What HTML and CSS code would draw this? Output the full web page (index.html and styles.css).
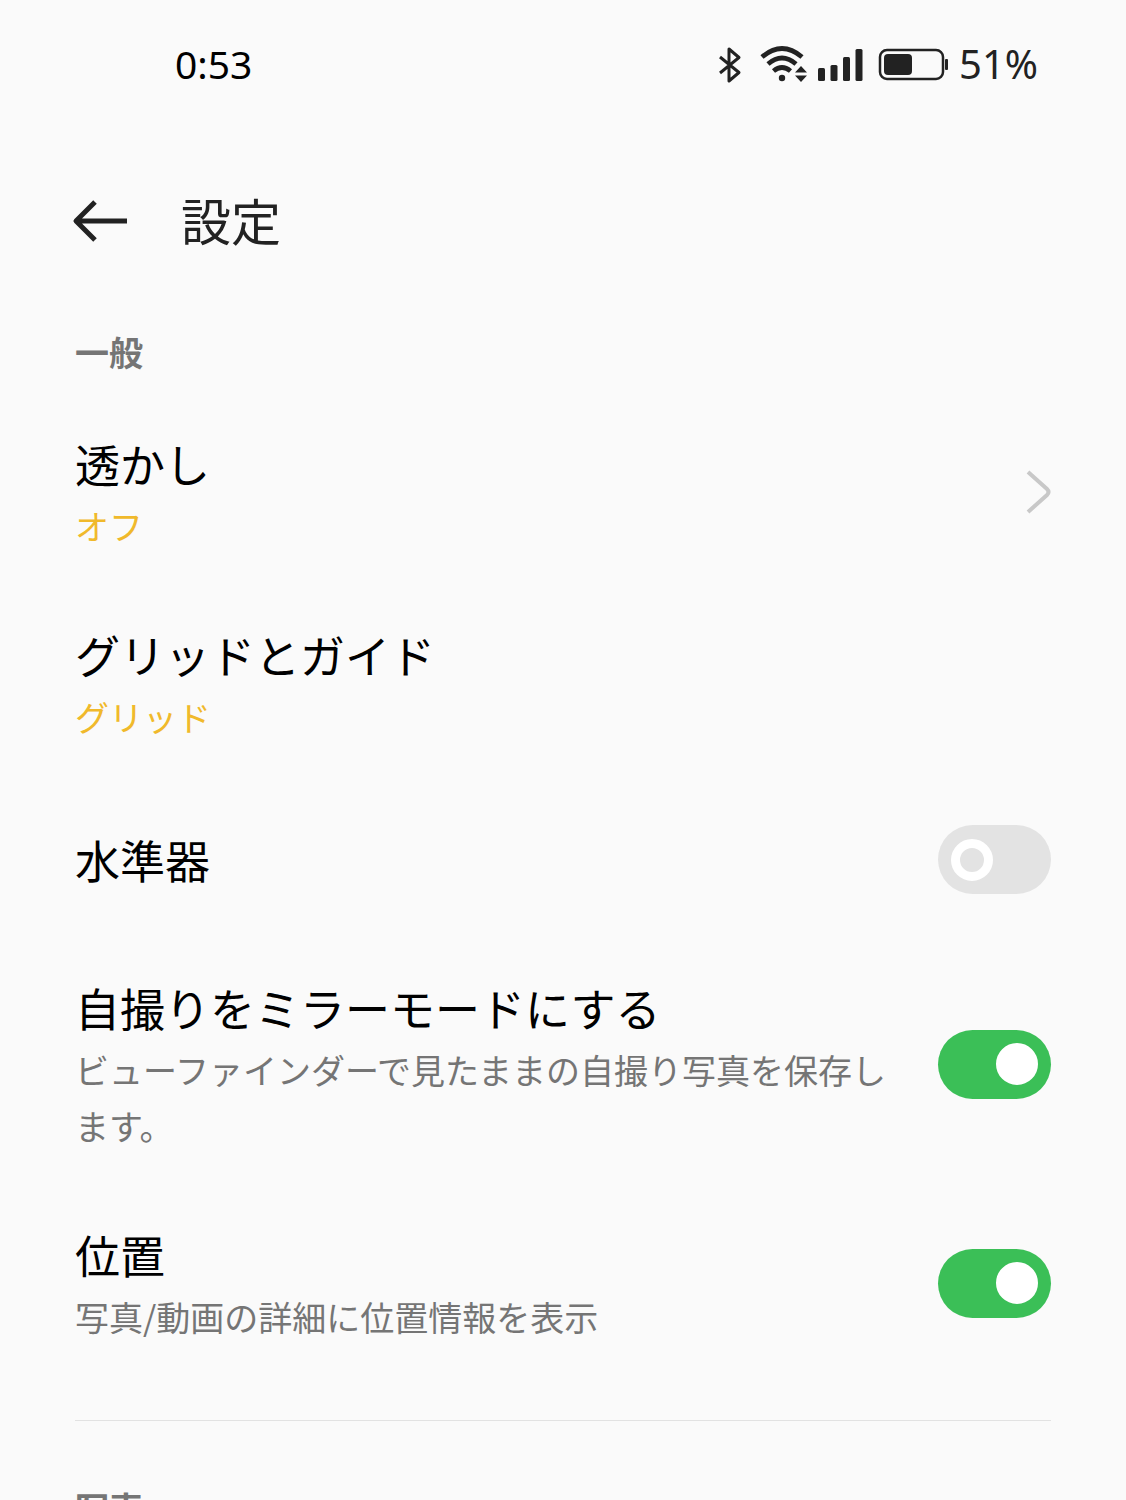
FILE: index.html
```
<!DOCTYPE html>
<html lang="ja">

<head>
    <meta charset="utf-8">
    <meta name="viewport" content="width=device-width, initial-scale=1">
    <title>設定</title>
    <link rel="stylesheet" href="styles.css">
</head>

<body>
    <div class="screen">
        <div class="status-bar">
            <span class="clock">0:53</span>
            <div class="status-icons">
                <svg class="icon-bluetooth" width="24" height="40" viewBox="0 0 24 40" aria-hidden="true">
                    <path d="M2 12 L21 27.500 L11 36 V4 L21 12.500 L2 28" fill="none" stroke="#222" stroke-width="3" stroke-linejoin="round" />
                </svg>
                <svg class="icon-wifi" width="48" height="40" viewBox="0 0 48 40" aria-hidden="true">
                    <g fill="none" stroke="#222" stroke-width="4.800">
                        <path d="M2 12 Q22 -5 42 12" />
                        <path d="M8 19 Q22 7 36 19" />
                        <path d="M13.500 26 Q22 19 30.500 26" />
                    </g>
                    <circle cx="22" cy="33" r="3.200" fill="#222" />
                    <path d="M41 21 L47 27.500 H35 Z M35 30.500 H47 L41 37 Z" fill="#222" />
                </svg>
                <svg class="icon-signal" width="45" height="40" viewBox="0 0 45 40" aria-hidden="true">
                    <g fill="#222">
                        <rect x="0" y="23" width="7" height="13" rx="1.500" />
                        <rect x="12.500" y="20" width="7" height="16" rx="1.500" />
                        <rect x="25" y="12" width="7" height="24" rx="1.500" />
                        <rect x="37.500" y="4" width="7" height="32" rx="1.500" />
                    </g>
                </svg>
                <svg class="icon-battery" width="71" height="40" viewBox="0 0 71 40" aria-hidden="true">
                    <rect x="2" y="5" width="63" height="29" rx="7" fill="none" stroke="#222" stroke-width="2.500" />
                    <rect x="6" y="9" width="28" height="21" rx="4" fill="#222" />
                    <rect x="67" y="14" width="3" height="11" rx="1" fill="#222" />
                </svg>
                <span class="battery-level">51%</span>
            </div>
        </div>

        <header class="app-bar">
            <button type="button" class="back-btn" aria-label="戻る">
                <svg width="56" height="44" viewBox="0 0 56 44" aria-hidden="true">
                    <path d="M23 3 L4 22 L23 41 M4 22 H55" fill="none" stroke="#222" stroke-width="5" stroke-linejoin="round" />
                </svg>
            </button>
            <h1>設定</h1>
        </header>

        <main>
            <section class="group">
                <h2>一般</h2>

                <a href="#watermark" class="row">
                    <span class="row-text">
                        <span class="row-title">透かし</span>
                        <span class="row-value">オフ</span>
                    </span>
                    <svg class="chevron" width="25" height="44" viewBox="0 0 25 44" aria-hidden="true">
                        <path d="M2 2 L21 19 Q24 22 21 25 L2 42" fill="none" stroke="#c8c8c8" stroke-width="4" />
                    </svg>
                </a>

                <a href="#grid" class="row">
                    <span class="row-text">
                        <span class="row-title">グリッドとガイド</span>
                        <span class="row-value">グリッド</span>
                    </span>
                </a>

                <label class="row row-single" for="level">
                    <span class="row-text">
                        <span class="row-title">水準器</span>
                    </span>
                    <input type="checkbox" role="switch" class="switch" id="level">
                </label>

                <label class="row" for="mirror">
                    <span class="row-text">
                        <span class="row-title">自撮りをミラーモードにする</span>
                        <span class="row-note">ビューファインダーで見たままの自撮り写真を保存します。</span>
                    </span>
                    <input type="checkbox" role="switch" class="switch" id="mirror" checked>
                </label>

                <label class="row" for="location">
                    <span class="row-text">
                        <span class="row-title">位置</span>
                        <span class="row-note">写真/動画の詳細に位置情報を表示</span>
                    </span>
                    <input type="checkbox" role="switch" class="switch" id="location" checked>
                </label>
            </section>

            <section class="group">
                <h2>写真</h2>
            </section>
        </main>
    </div>
</body>

</html>
```
FILE: styles.css
```
* {
    box-sizing: border-box;
}

body {
    margin: 0;
    background-color: #fafafa;
    color: #000;
    font-family: "Noto Sans CJK JP", sans-serif;
}

.screen {
    height: 100vh;
    overflow: hidden;
}

/* Status bar */
.status-bar {
    display: flex;
    justify-content: space-between;
    align-items: center;
    height: 130px;
    padding: 0 88px 0 175px;
    font-family: "Noto Sans", sans-serif;
    font-size: 39px;
    line-height: 48px;
}

.clock,
.battery-level {
    padding-bottom: 2px;
}

.status-icons {
    display: flex;
    align-items: center;
    color: #222;
}

.icon-wifi {
    margin-left: 18px;
}

.icon-signal {
    margin-left: 10px;
}

.icon-battery {
    margin-left: 15px;
}

.battery-level {
    margin-left: 10px;
    font-size: 40px;
}

/* Title bar */
.app-bar {
    display: flex;
    align-items: center;
    gap: 53px;
    height: 182px;
    padding: 0 72px;
}

.back-btn {
    display: flex;
    padding: 0;
    border: none;
    background: none;
    cursor: pointer;
}

h1 {
    margin: 0;
    padding-bottom: 4px;
    color: #222;
    font-size: 50px;
    font-weight: normal;
    line-height: 72px;
}

/* Settings list */
main {
    padding: 0 75px;
}

.group {
    padding-top: 12px;
}

.group + .group {
    margin-top: 42px;
    padding-top: 59px;
    border-top: 1px solid #e2e2e2;
}

h2 {
    margin: 0 0 16px;
    color: #757575;
    font-size: 34px;
    font-weight: bold;
    line-height: 56px;
}

.row {
    display: flex;
    justify-content: space-between;
    align-items: center;
    gap: 48px;
    padding: 34px 0 33px;
    color: inherit;
    text-decoration: none;
    cursor: pointer;
}

.row-single {
    padding: 47px 0 46px;
}

.row-text {
    flex: 1;
}

.row-title,
.row-value,
.row-note {
    display: block;
}

.row-title {
    font-size: 45px;
    line-height: 68px;
}

.row-value,
.row-note {
    font-size: 34px;
    line-height: 56px;
}

.row-value {
    color: #f0b92b;
}

.row-note {
    color: #757575;
}

.chevron {
    flex: none;
}

/* Switch */
.switch {
    display: flex;
    flex: none;
    align-items: center;
    width: 113px;
    height: 69px;
    margin: 0;
    padding: 0 13px;
    border-radius: 35px;
    background-color: #e3e3e3;
    appearance: none;
    cursor: pointer;
}

.switch::before {
    content: "";
    box-sizing: border-box;
    width: 42px;
    height: 42px;
    border: 9px solid #fff;
    border-radius: 50%;
}

.switch:checked {
    justify-content: flex-end;
    background-color: #3bbf57;
}

.switch:checked::before {
    background-color: #fff;
}
```
